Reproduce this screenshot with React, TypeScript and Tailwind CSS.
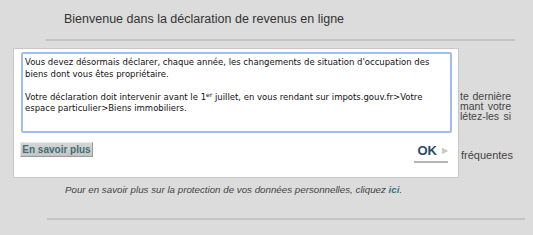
import React from "react";

export default function App() {
  return (
    <div className="relative w-[533px] h-[235px] overflow-hidden bg-[#dcdcdc] font-['Liberation_Sans',Arial,sans-serif]">
      {/* page behind */}
      <div className="pt-[11px] pl-[64px] text-[12.5px] leading-[16px] text-[#333]">
        Bienvenue dans la déclaration de revenus en ligne
      </div>
      <div className="mt-[12px] ml-[46px] w-[469px] h-[2px] bg-[#c4c4c4]" />
      <div className="mt-[50px] ml-[460px] w-[51px] text-[10.5px] leading-[10px] text-[#444] whitespace-nowrap">
        <div className="[text-align-last:justify]">te dernière</div>
        <div className="[text-align-last:justify]">mant votre</div>
        <div className="[text-align-last:justify]">létez-les si</div>
      </div>
      <div className="mt-[29px] ml-[461px] text-[11px] leading-[10px] text-[#444]">fréquentes</div>
      <div className="mt-[23px] pl-[65px] text-[9.75px] leading-[13px] italic text-[#444] whitespace-nowrap">
        Pour en savoir plus sur la protection de vos données personnelles, cliquez{" "}
        <span className="font-bold text-[#3b7585]">ici</span>.
      </div>
      <div className="mt-[22px] ml-[47px] w-[478px] h-[2px] bg-[#c4c4c4]" />

      {/* modal overlay */}
      <div className="absolute left-[13px] top-[48px] w-[446px] h-[130px] bg-white border border-[#c8c8c8] flex flex-col">
        <div className="mt-[3px] ml-[7px] w-[431px] h-[81px] border-2 border-[#9dbdf3] rounded-[2px] px-[2px] pt-[3px] font-['DejaVu_Sans',Verdana,sans-serif] text-[8.5px] leading-[11.5px] text-[#111]">
          <div>Vous devez désormais déclarer, chaque année, les changements de situation d'occupation des biens dont vous êtes propriétaire.</div>
          <div className="h-[11.5px]" />
          <div>
            Votre déclaration doit intervenir avant le 1<span className="relative -top-[3px] text-[6px] leading-none">er</span> juillet, en vous rendant sur impots.gouv.fr&gt;Votre espace particulier&gt;Biens immobiliers.
          </div>
        </div>
        <div className="flex items-start justify-between mt-[9px] ml-[6px] mr-[10px]">
          <div className="w-[73px] h-[15px] whitespace-nowrap bg-gradient-to-b from-[#d6d6d6] to-[#c4c4c4] border-r border-b border-[#9a9a9a] border-t border-l border-t-[#e8e8e8] border-l-[#e8e8e8] flex items-center justify-center text-[10px] font-bold text-[#3f6e78]">
            En savoir plus
          </div>
          <div className="flex flex-col items-stretch mt-[2px]">
            <div className="flex items-center gap-[5px] pl-[4px] h-[14px]">
              <span className="text-[13px] font-bold text-[#2c4a6b] leading-[14px]">OK</span>
              <span className="text-[8px] text-[#c8c8c8] leading-[14px]">▶</span>
            </div>
            <div className="mt-[3px] h-[2px] bg-[#b4b4b4]" />
          </div>
        </div>
      </div>
    </div>
  );
}
